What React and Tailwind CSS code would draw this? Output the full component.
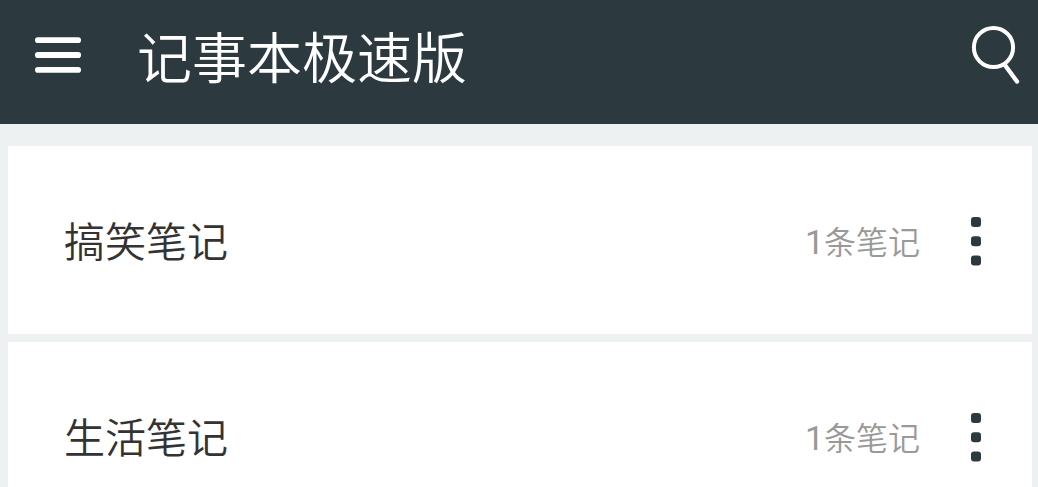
import { useState } from 'react';

const notebooks = [
    { id: 1, name: '搞笑笔记', count: 1 },
    { id: 2, name: '生活笔记', count: 1 },
];

const Header = () => {
    return (
        <header className="flex items-center h-[124px] pl-[35px] pr-[18px] pb-3.5 bg-[#2c393e] text-white">
            <button aria-label="菜单" className="shrink-0">
                <svg width="46" height="36" viewBox="0 0 46 36" fill="currentColor">
                    <rect x="0" y="0.3" width="46" height="5.7" rx="2.8" />
                    <rect x="0" y="15" width="46" height="6" rx="2.8" />
                    <rect x="0" y="30" width="46" height="5.7" rx="2.8" />
                </svg>
            </button>
            <h1 className="flex-1 ml-14 pt-2 text-[55px] leading-[60px] font-[350]">记事本极速版</h1>
            <button aria-label="搜索" className="shrink-0">
                <svg width="50" height="60" viewBox="0 0 50 60" fill="none" stroke="currentColor" strokeWidth="4" strokeLinecap="round">
                    <circle cx="23.5" cy="22.5" r="19.6" />
                    <path d="M34.5 39.5L47 56.5" strokeWidth="4.4" />
                </svg>
            </button>
        </header>
    );
};

const NotebookRow = ({ notebook }) => {
    const [isOpen, setIsOpen] = useState(false);

    return (
        <li className="flex items-center h-[188px] pt-0.5 pl-14 pr-[50px] bg-white">
            <h2 className="flex-1 pt-1 text-[41px] leading-[48px] font-[350] text-[#333333]">{notebook.name}</h2>
            <p className="pt-0.5 text-[32px] leading-[40px] font-[350] text-[#999999]">
                <span className="text-[34px] font-normal">{notebook.count}</span>条笔记
            </p>
            <button
                aria-label="更多"
                aria-expanded={isOpen}
                onClick={() => setIsOpen(!isOpen)}
                className="ml-[50px] shrink-0"
            >
                <svg width="12" height="50" viewBox="0 0 12 50" fill="#2c393e">
                    <rect x="1" y="1" width="10" height="10" rx="3" />
                    <rect x="1" y="20.3" width="10" height="10" rx="3" />
                    <rect x="1" y="39.6" width="10" height="10" rx="3" />
                </svg>
            </button>
        </li>
    );
};

const App = () => {
    return (
        <div className="min-h-screen bg-[#edf1f2] font-[Roboto,'Noto_Sans_CJK_SC',sans-serif]">
            <Header />
            <main className="pt-[22px] pl-2 pr-1.5">
                <ul className="flex flex-col gap-2">
                    {notebooks.map((notebook) => (
                        <NotebookRow key={notebook.id} notebook={notebook} />
                    ))}
                </ul>
            </main>
        </div>
    );
};

export default App;
